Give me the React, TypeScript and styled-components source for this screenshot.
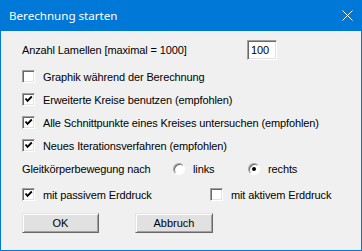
import React from 'react';
import styled, { createGlobalStyle } from 'styled-components';

const GlobalStyle = createGlobalStyle`
	html, body {
		margin: 0;
		padding: 0;
		background: #f0f0f0;
	}
	* { box-sizing: border-box; }
`;

const Window = styled.div`
	width: 362px;
	height: 251px;
	display: flex;
	flex-direction: column;
	background: #f0f0f0;
	border: 1px solid #0078d7;
	border-top: none;
	font-family: 'Liberation Sans', Arial, sans-serif;
	font-size: 11px;
	letter-spacing: -0.12px;
	color: #000;
`;

const TitleBar = styled.div`
	height: 31px;
	flex: none;
	display: flex;
	align-items: center;
	justify-content: space-between;
	padding: 0 9px 0 9px;
	margin: 0 -1px;
	background: #0078d7;
	color: #fff;
	font-family: 'Noto Sans', 'Open Sans', sans-serif;
	font-size: 11.6px;
	letter-spacing: 0;
`;

const CloseIcon = () => (
	<svg width="11" height="11" viewBox="0 0 11 11">
		<path d="M0.5 0.5 L10.5 10.5 M10.5 0.5 L0.5 10.5" stroke="#fff" strokeWidth="1" />
	</svg>
);

const Body = styled.div`
	display: flex;
	flex-direction: column;
	padding: 9px 0 0 21px;
`;

const Row = styled.div<{ $h?: number; $mt?: number }>`
	display: flex;
	align-items: center;
	height: ${({ $h }) => $h ?? 23}px;
	margin-top: ${({ $mt }) => $mt ?? 0}px;
	white-space: nowrap;
`;

const Group = styled.div`
	display: flex;
	flex-direction: column;
	margin-top: 5px;
`;

const Label = styled.span<{ $w?: number }>`
	width: ${({ $w }) => ($w ? `${$w}px` : 'auto')};
	flex: none;
`;

const TextBox = styled.div`
	width: 30px;
	height: 20px;
	background: #fff;
	border: 1px solid;
	border-color: #a0a0a0 #fff #fff #a0a0a0;
	box-shadow: inset 1px 1px #696969, inset -1px -1px #e3e3e3;
	padding: 3px 0 0 3px;
	line-height: 13px;
`;

const CheckItem = styled.label<{ $w?: number }>`
	display: flex;
	align-items: center;
	gap: 8px;
	width: ${({ $w }) => ($w ? `${$w}px` : 'auto')};
	flex: none;
`;

const CheckBoxFrame = styled.span`
	width: 13px;
	height: 13px;
	flex: none;
	display: flex;
	align-items: center;
	justify-content: center;
	background: #fff;
	border: 1px solid;
	border-color: #a0a0a0 #fff #fff #a0a0a0;
	box-shadow: inset 1px 1px #696969, inset -1px -1px #e3e3e3;
`;

const Check = ({ checked }: { checked?: boolean }) => (
	<CheckBoxFrame>
		{checked && (
			<svg width="9" height="9" viewBox="0 0 9 9">
				<path d="M1.5 3.5 L3.5 5.8 L7.8 1.5" stroke="#000" strokeWidth="1.9" fill="none" />
			</svg>
		)}
	</CheckBoxFrame>
);

const RadioFrame = styled.span`
	width: 12px;
	height: 12px;
	flex: none;
	border-radius: 50%;
	display: flex;
	align-items: center;
	justify-content: center;
	background: #fff;
	border: 1px solid;
	border-color: #a0a0a0 #fff #fff #a0a0a0;
	box-shadow: inset 1px 1px #696969;
`;

const Dot = styled.span`
	width: 4px;
	height: 4px;
	border-radius: 50%;
	background: #000;
`;

const Radio = ({ checked }: { checked?: boolean }) => <RadioFrame>{checked && <Dot />}</RadioFrame>;

const Buttons = styled.div`
	display: flex;
	gap: 36px;
	margin-top: 7px;
`;

const Button = styled.button<{ $w: number }>`
	width: ${({ $w }) => $w}px;
	height: 20px;
	padding: 0;
	background: #e1e1e1;
	border: 1px solid;
	border-color: #e3e3e3 #696969 #696969 #e3e3e3;
	box-shadow: inset 1px 1px #fff, inset -1px -1px #a0a0a0;
	font-family: 'Liberation Sans', Arial, sans-serif;
	font-size: 11px;
	color: #000;
`;

const options = [
	{ text: 'Graphik während der Berechnung', checked: false },
	{ text: 'Erweiterte Kreise benutzen (empfohlen)', checked: true },
	{ text: 'Alle Schnittpunkte eines Kreises untersuchen (empfohlen)', checked: true },
	{ text: 'Neues Iterationsverfahren (empfohlen)', checked: true },
];

export default function App() {
	return (
		<>
			<GlobalStyle />
			<Window>
				<TitleBar>
					<span>Berechnung starten</span>
					<CloseIcon />
				</TitleBar>
				<Body>
					<Row $h={20}>
						<Label $w={225}>Anzahl Lamellen [maximal = 1000]</Label>
						<TextBox>100</TextBox>
					</Row>
					<Group>
						{options.map((o) => (
							<Row key={o.text}>
								<CheckItem>
									<Check checked={o.checked} />
									{o.text}
								</CheckItem>
							</Row>
						))}
						<Row>
							<Label $w={151}>Gleitkörperbewegung nach</Label>
							<CheckItem $w={75}>
								<Radio />
								links
							</CheckItem>
							<CheckItem>
								<Radio checked />
								rechts
							</CheckItem>
						</Row>
					</Group>
					<Row $mt={3}>
						<CheckItem $w={188}>
							<Check checked />
							mit passivem Erddruck
						</CheckItem>
						<CheckItem>
							<Check />
							mit aktivem Erddruck
						</CheckItem>
					</Row>
					<Buttons>
						<Button $w={77}>OK</Button>
						<Button $w={78}>Abbruch</Button>
					</Buttons>
				</Body>
			</Window>
		</>
	);
}
